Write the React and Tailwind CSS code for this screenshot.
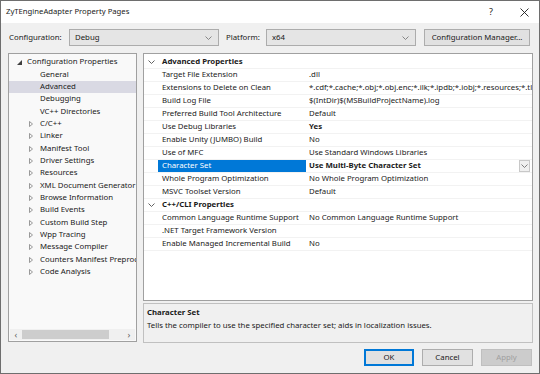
import React from 'react';

const FONT = { fontFamily: '"Noto Sans", "Open Sans", sans-serif' };

// Tree items on the left (leaf = page, otherwise a collapsed group)
const TREE = [
  { label: 'General', leaf: true },
  { label: 'Advanced', leaf: true, selected: true },
  { label: 'Debugging', leaf: true },
  { label: 'VC++ Directories', leaf: true },
  { label: 'C/C++' },
  { label: 'Linker' },
  { label: 'Manifest Tool' },
  { label: 'Driver Settings' },
  { label: 'Resources' },
  { label: 'XML Document Generator' },
  { label: 'Browse Information' },
  { label: 'Build Events' },
  { label: 'Custom Build Step' },
  { label: 'Wpp Tracing' },
  { label: 'Message Compiler' },
  { label: 'Counters Manifest Preprocessor' },
  { label: 'Code Analysis' },
];

const GROUPS = [
  {
    title: 'Advanced Properties',
    rows: [
      ['Target File Extension', '.dll'],
      ['Extensions to Delete on Clean', '*.cdf;*.cache;*.obj;*.obj.enc;*.ilk;*.ipdb;*.iobj;*.resources;*.tlb;*.tli;*.tlh;*.tmp'],
      ['Build Log File', '$(IntDir)$(MSBuildProjectName).log'],
      ['Preferred Build Tool Architecture', 'Default'],
      ['Use Debug Libraries', 'Yes', 'bold'],
      ['Enable Unity (JUMBO) Build', 'No'],
      ['Use of MFC', 'Use Standard Windows Libraries'],
      ['Character Set', 'Use Multi-Byte Character Set', 'selected'],
      ['Whole Program Optimization', 'No Whole Program Optimization'],
      ['MSVC Toolset Version', 'Default'],
    ],
  },
  {
    title: 'C++/CLI Properties',
    rows: [
      ['Common Language Runtime Support', 'No Common Language Runtime Support'],
      ['.NET Target Framework Version', ''],
      ['Enable Managed Incremental Build', 'No'],
    ],
  },
];

const Chevron = ({ className = '' }) => (
  <svg width="7" height="4" viewBox="0 0 7 4" className={className}>
    <polyline points="0.5,0.5 3.5,3.5 6.5,0.5" fill="none" stroke="currentColor" strokeWidth="0.9" />
  </svg>
);

const Combo = ({ value, className }) => (
  <div className={`h-[17px] shrink-0 flex items-center justify-between bg-[#e5e5e5] border border-[#acacac] pl-[5px] pr-[6px] ${className}`}>
    <span>{value}</span>
    <Chevron className="text-[#7a7a7a]" />
  </div>
);

const Button = ({ children, className = '', disabled, primary }) => (
  <div
    className={`h-[17px] shrink-0 flex items-center justify-center ${
      primary
        ? 'border-2 border-[#0078d7] bg-[#e1e1e1]'
        : disabled
        ? 'border border-[#bfbfbf] bg-[#cccccc] text-[#a0a0a0]'
        : 'border border-[#adadad] bg-[#e1e1e1]'
    } ${className}`}
  >
    {children}
  </div>
);

const TreePanel = () => (
  <div className="w-[129px] shrink-0 h-[289px] border border-[#a0a0a0] bg-[#f9f9f9] flex flex-col overflow-hidden">
    <div className="flex-1 pt-[2px] overflow-hidden">
      <div className="h-[12.35px] flex items-center whitespace-nowrap">
        <svg width="5" height="5" viewBox="0 0 5 5" className="ml-[8px] mr-[5px] shrink-0 text-[#404040]">
          <polygon points="5,0 5,5 0,5" fill="currentColor" />
        </svg>
        <span>Configuration Properties</span>
      </div>
      {TREE.map((t) => (
        <div
          key={t.label}
          className={`h-[12.35px] flex items-center whitespace-nowrap ${t.selected ? 'bg-[#d9d9e3]' : ''}`}
        >
          {t.leaf ? (
            <span className="w-[31px] shrink-0" />
          ) : (
            <svg width="4" height="6" viewBox="0 0 4 6" className="ml-[20px] mr-[7px] shrink-0 text-[#808080]">
              <polygon points="0.5,0.5 3.5,3 0.5,5.5" fill="none" stroke="currentColor" strokeWidth="0.8" />
            </svg>
          )}
          <span>{t.label}</span>
        </div>
      ))}
    </div>
    {/* horizontal scrollbar */}
    <div className="h-[11px] mb-[1px] mx-[1px] flex items-center bg-[#f0f0f0]">
      <span className="w-[12px] text-center text-[9px] leading-none text-[#606060]">‹</span>
      <div className="w-[87px] h-[9px] bg-[#cdcdcd]" />
      <div className="flex-1" />
      <span className="w-[12px] text-center text-[9px] leading-none text-[#606060]">›</span>
    </div>
  </div>
);

const PropertyGrid = () => (
  <div className="h-[248px] border border-[#a0a0a0] bg-white overflow-hidden pt-[2px]">
    {GROUPS.map((g) => (
      <div key={g.title}>
        <div className="h-[13px] flex items-center font-bold border-b border-[#f2f2f2]">
          <span className="w-[14px] flex justify-center shrink-0 text-[#505050]">
            <Chevron />
          </span>
          <span className="pl-[4px]">{g.title}</span>
        </div>
        {g.rows.map(([name, value, kind]) => (
          <div key={name} className="h-[13px] flex items-center border-b border-[#f2f2f2]">
            <span className="w-[14px] shrink-0 self-stretch" />
            <span
              className={`w-[148px] shrink-0 self-stretch flex items-center pl-[4px] whitespace-nowrap overflow-hidden ${
                kind === 'selected' ? 'bg-[#0078d7] text-white' : ''
              }`}
            >
              {name}
            </span>
            <span className={`flex-1 min-w-0 pl-[3px] whitespace-nowrap overflow-hidden ${kind ? 'font-bold' : ''}`}>
              {value}
            </span>
            {kind === 'selected' && (
              <span className="w-[11px] h-[12px] mr-[2px] shrink-0 flex items-center justify-center bg-[#f0f0f0] border border-[#c8c8c8] text-[#707070]">
                <Chevron />
              </span>
            )}
          </div>
        ))}
      </div>
    ))}
  </div>
);

export default function App() {
  return (
    <div
      style={FONT}
      className="w-[540px] h-[374px] bg-[#f0f0f0] border border-[#6e6e6e] flex flex-col text-[7.8px] text-[#1a1a1a] overflow-hidden"
    >
      {/* title bar */}
      <div className="h-[22px] bg-white flex items-center justify-between shrink-0">
        <span className="pl-[5px] text-[7.7px]">ZyTEngineAdapter Property Pages</span>
        <div className="flex items-center">
          <span className="text-[9px] mr-[27px]">?</span>
          <svg width="9" height="9" viewBox="0 0 9 9" className="mr-[10px]">
            <path d="M0.5 0.5 L8.5 8.5 M8.5 0.5 L0.5 8.5" stroke="#1a1a1a" strokeWidth="0.9" />
          </svg>
        </div>
      </div>

      {/* configuration row */}
      <div className="flex items-center mt-[6px] pl-[8px] pr-[7px] shrink-0">
        <span className="w-[60px] shrink-0">Configuration:</span>
        <Combo value="Debug" className="w-[150px]" />
        <span className="ml-[7px] w-[40px] shrink-0">Platform:</span>
        <Combo value="x64" className="w-[150px]" />
        <Button className="ml-[8px] w-[106px]">Configuration Manager...</Button>
      </div>

      {/* main area */}
      <div className="flex mt-[7px] pl-[7px] pr-[6px] shrink-0">
        <TreePanel />
        <div className="ml-[6px] flex-1 min-w-0 flex flex-col">
          <PropertyGrid />
          <div className="mt-[2px] h-[40px] border border-[#c0c0c0] bg-[#f0f0f0] px-[3px] pt-[2px]">
            <div className="font-bold h-[13px] flex items-center">Character Set</div>
            <div className="h-[13px] flex items-center">
              Tells the compiler to use the specified character set; aids in localization issues.
            </div>
          </div>
        </div>
      </div>

      {/* dialog buttons */}
      <div className="flex justify-end mt-[6px] pr-[7px] gap-[8px]">
        <Button primary className="w-[50px]">OK</Button>
        <Button className="w-[51px]">Cancel</Button>
        <Button disabled className="w-[51px]">Apply</Button>
      </div>
    </div>
  );
}
